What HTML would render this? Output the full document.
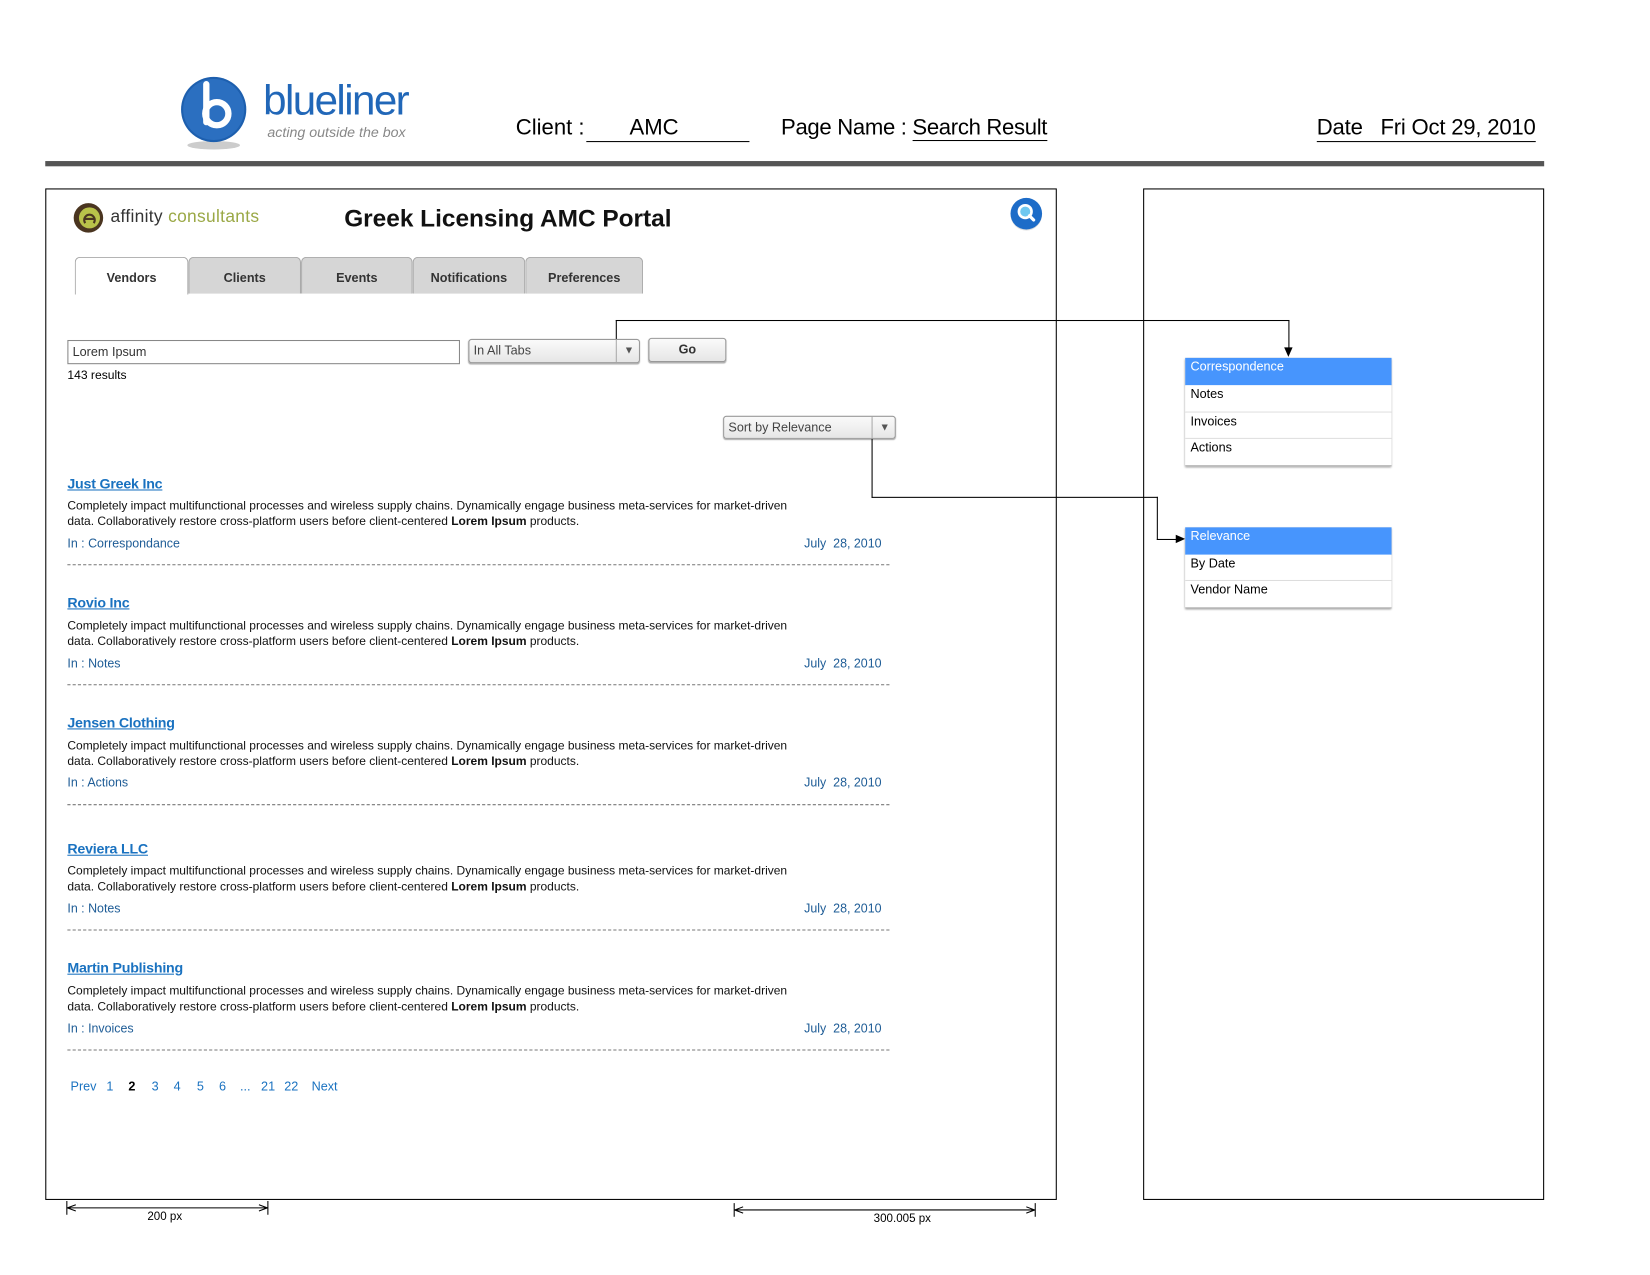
<!DOCTYPE html>
<html><head><meta charset="utf-8"><style>
html,body{margin:0;padding:0;background:#fff;width:1650px;height:1274px;overflow:hidden}
#s{position:absolute;left:0;top:0;width:1568px;height:1211px;transform:scale(1.0526);transform-origin:0 0;font-family:"Liberation Sans",Arial,sans-serif;color:#000}
.a{position:absolute;white-space:nowrap}
.tab{position:absolute;top:244px;height:35px;background:#d6d6d6;border:1px solid #aaa;border-bottom:none;border-radius:5px 5px 0 0;font-size:12px;font-weight:bold;color:#333;text-align:center;line-height:38px;box-sizing:border-box}
.sel{position:absolute;border:1px solid #999;border-radius:3px;background:linear-gradient(#fafafa,#e6e6e6);box-shadow:0 1px 1px #aaa;box-sizing:border-box;font-size:12px;color:#444;line-height:21px;padding-left:4px}
.title{font-size:13.5px;font-weight:bold;color:#1a72c0;text-decoration:underline;letter-spacing:-0.2px}
.desc{font-size:11.4px;line-height:15px;color:#111}
.meta{font-size:11.8px;color:#1e5c96}
.dash{position:absolute;left:64px;width:781px;border-top:1px dashed #777}
.row{position:absolute;left:1126px;width:196px;height:25px;border-bottom:1px solid #ddd;font-size:12px;line-height:16px;padding-left:5px;box-sizing:border-box;background:#fff}
.ln{position:absolute;background:#000}
.pg{position:absolute;top:1025px;font-size:12px;color:#1a72c0}
</style></head><body><div id="s">
<svg class="a" style="left:168px;top:68px" width="72" height="80" viewBox="0 0 72 80">
<ellipse cx="35" cy="70" rx="25" ry="4" fill="#ccc"/>
<circle cx="35" cy="36" r="31" fill="#1d5fae"/>
<circle cx="35" cy="36" r="29" fill="#2b6fc0"/>
<path d="M28 12 V48" stroke="#fff" stroke-width="6" stroke-linecap="round"/>
<circle cx="38" cy="40" r="11" fill="none" stroke="#fff" stroke-width="6"/>
</svg>
<div class="a" style="left:250px;top:74px;font-size:40px;color:#2167b8;letter-spacing:-1.5px">blueliner</div>
<div class="a" style="left:254px;top:118px;font-size:13.5px;font-style:italic;color:#888">acting outside the box</div>
<div class="a" style="left:490px;top:110px;font-size:21px">Client :</div>
<div class="a" style="left:557px;top:110px;width:155px;border-bottom:1px solid #000;font-size:21px;height:24px"><span style="margin-left:41px">AMC</span></div>
<div class="a" style="left:742px;top:110px;font-size:21px;letter-spacing:-0.3px">Page Name : <span style="border-bottom:1px solid #000">Search Result</span></div>
<div class="a" style="left:1251px;top:110px;font-size:21px;border-bottom:1px solid #000;line-height:24px;letter-spacing:-0.2px">Date&nbsp;&nbsp; Fri Oct 29, 2010</div>
<div class="a" style="left:43px;top:153px;width:1424px;height:5px;background:#555"></div>
<div class="a" style="left:43px;top:179px;width:959px;height:959px;border:1.5px solid #000"></div>
<div class="a" style="left:1086px;top:179px;width:379px;height:959px;border:1.5px solid #000"></div>
<svg class="a" style="left:69px;top:192px" width="30" height="30" viewBox="0 0 30 30">
<circle cx="15" cy="15" r="14" fill="#4a3520"/><circle cx="16" cy="15" r="10" fill="#b9c24a"/>
<path d="M11 16h10M12 20a5 5 0 1 1 8 0" stroke="#4a3520" stroke-width="2" fill="none"/>
</svg>
<div class="a" style="left:105px;top:197px;font-size:16.5px;color:#333;letter-spacing:0.3px">affinity <span style="color:#9aa845">consultants</span></div>
<div class="a" style="left:327px;top:194px;font-size:23.2px;font-weight:bold;color:#111">Greek Licensing AMC Portal</div>
<svg class="a" style="left:959px;top:187px" width="34" height="34" viewBox="0 0 34 34">
<circle cx="16" cy="17" r="15" fill="#ddd"/><circle cx="16" cy="16" r="15" fill="#1d6cc8"/>
<circle cx="15" cy="14" r="6" fill="#6fc8f0" stroke="#fff" stroke-width="2.5"/><path d="M19 18l4 4" stroke="#fff" stroke-width="3" stroke-linecap="round"/>
</svg>
<div class="tab" style="left:71px;width:108px;background:#fff;height:36px">Vendors</div>
<div class="tab" style="left:179px;width:107px">Clients</div>
<div class="tab" style="left:286px;width:106px">Events</div>
<div class="tab" style="left:392px;width:107px">Notifications</div>
<div class="tab" style="left:499px;width:112px">Preferences</div>
<div class="a" style="left:64px;top:323px;width:373px;height:23px;border:1px solid #888;box-sizing:border-box;font-size:12px;line-height:21px;padding-left:4px;color:#333">Lorem Ipsum</div>
<div class="sel" style="left:445px;top:322px;width:163px;height:23px">In All Tabs<span style="position:absolute;left:139px;top:0;height:21px;border-left:1px solid #aaa;width:23px;text-align:center;font-size:10px;color:#555">▼</span></div>
<div class="sel" style="left:616px;top:321px;width:74px;height:23px;text-align:center;padding:0;font-weight:bold;color:#333">Go</div>
<div class="a" style="left:64px;top:351px;font-size:11.5px">143 results</div>
<div class="sel" style="left:687px;top:395px;width:164px;height:22px;line-height:21px">Sort by Relevance<span style="position:absolute;left:140px;top:0;height:20px;border-left:1px solid #aaa;width:23px;text-align:center;font-size:10px;color:#555">▼</span></div>
<div class="ln" style="left:585px;top:304px;width:1px;height:18px"></div>
<div class="ln" style="left:585px;top:304px;width:640px;height:1px"></div>
<div class="ln" style="left:1224px;top:304px;width:1px;height:30px"></div>
<div class="a" style="left:1220px;top:330px;width:0;height:0;border-left:4px solid transparent;border-right:4px solid transparent;border-top:9px solid #000"></div>
<div class="ln" style="left:828px;top:417px;width:1px;height:56px"></div>
<div class="ln" style="left:828px;top:472px;width:272px;height:1px"></div>
<div class="ln" style="left:1099px;top:472px;width:1px;height:41px"></div>
<div class="ln" style="left:1099px;top:512px;width:20px;height:1px"></div>
<div class="a" style="left:1117px;top:508px;width:0;height:0;border-top:4px solid transparent;border-bottom:4px solid transparent;border-left:9px solid #000"></div>
<div class="a" style="left:1126px;top:340px;width:196px;height:103px;box-shadow:0 1px 2px #888;border:1px solid #ccc;box-sizing:border-box"></div>
<div class="row" style="top:340px;height:26px;background:#4795fd;color:#fff;border:none">Correspondence</div>
<div class="row" style="top:366px;height:26px">Notes</div>
<div class="row" style="top:392px;height:25px">Invoices</div>
<div class="row" style="top:417px;height:26px;border-bottom:1px solid #aaa">Actions</div>
<div class="a" style="left:1126px;top:501px;width:196px;height:77px;box-shadow:0 1px 2px #888;border:1px solid #ccc;box-sizing:border-box"></div>
<div class="row" style="top:501px;height:26px;background:#4795fd;color:#fff;border:none">Relevance</div>
<div class="row" style="top:527px;height:25px">By Date</div>
<div class="row" style="top:552px;height:26px;border-bottom:1px solid #aaa">Vendor Name</div>

<div class="a title" style="left:64px;top:452px">Just Greek Inc</div>
<div class="a desc" style="left:64px;top:474px">Completely impact multifunctional processes and wireless supply chains. Dynamically engage business meta-services for market-driven<br>data. Collaboratively restore cross-platform users before client-centered <b>Lorem Ipsum</b> products.</div>
<div class="a meta" style="left:64px;top:509px">In : Correspondance</div><div class="a meta" style="left:764px;top:509px">July&nbsp; 28, 2010</div>
<div class="dash" style="top:536px"></div>

<div class="a title" style="left:64px;top:565px">Rovio Inc</div>
<div class="a desc" style="left:64px;top:588px">Completely impact multifunctional processes and wireless supply chains. Dynamically engage business meta-services for market-driven<br>data. Collaboratively restore cross-platform users before client-centered <b>Lorem Ipsum</b> products.</div>
<div class="a meta" style="left:64px;top:623px">In : Notes</div><div class="a meta" style="left:764px;top:623px">July&nbsp; 28, 2010</div>
<div class="dash" style="top:650px"></div>

<div class="a title" style="left:64px;top:679px">Jensen Clothing</div>
<div class="a desc" style="left:64px;top:702px">Completely impact multifunctional processes and wireless supply chains. Dynamically engage business meta-services for market-driven<br>data. Collaboratively restore cross-platform users before client-centered <b>Lorem Ipsum</b> products.</div>
<div class="a meta" style="left:64px;top:736px">In : Actions</div><div class="a meta" style="left:764px;top:736px">July&nbsp; 28, 2010</div>
<div class="dash" style="top:764px"></div>

<div class="a title" style="left:64px;top:799px">Reviera LLC</div>
<div class="a desc" style="left:64px;top:821px">Completely impact multifunctional processes and wireless supply chains. Dynamically engage business meta-services for market-driven<br>data. Collaboratively restore cross-platform users before client-centered <b>Lorem Ipsum</b> products.</div>
<div class="a meta" style="left:64px;top:856px">In : Notes</div><div class="a meta" style="left:764px;top:856px">July&nbsp; 28, 2010</div>
<div class="dash" style="top:883px"></div>

<div class="a title" style="left:64px;top:912px">Martin Publishing</div>
<div class="a desc" style="left:64px;top:935px">Completely impact multifunctional processes and wireless supply chains. Dynamically engage business meta-services for market-driven<br>data. Collaboratively restore cross-platform users before client-centered <b>Lorem Ipsum</b> products.</div>
<div class="a meta" style="left:64px;top:970px">In : Invoices</div><div class="a meta" style="left:764px;top:970px">July&nbsp; 28, 2010</div>
<div class="dash" style="top:997px"></div>

<div class="pg" style="left:67px">Prev</div><div class="pg" style="left:101px">1</div>
<div class="pg" style="left:122px;color:#000;font-weight:bold">2</div>
<div class="pg" style="left:144px">3</div><div class="pg" style="left:165px">4</div><div class="pg" style="left:187px">5</div><div class="pg" style="left:208px">6</div>
<div class="pg" style="left:228px">...</div><div class="pg" style="left:248px">21</div><div class="pg" style="left:270px">22</div><div class="pg" style="left:296px">Next</div>

<svg class="a" style="left:60px;top:1138px" width="200" height="20"><path d="M3.5 3v13M194.5 3v13M4 9.5h190M4 9.5l8-3M4 9.5l8 3M194 9.5l-8-3M194 9.5l-8 3" stroke="#000" fill="none"/></svg>
<div class="a" style="left:140px;top:1150px;font-size:11px">200 px</div>
<svg class="a" style="left:694px;top:1140px" width="295" height="20"><path d="M3.5 3v13M289.5 3v13M4 9.5h285M4 9.5l8-3M4 9.5l8 3M289 9.5l-8-3M289 9.5l-8 3" stroke="#000" fill="none"/></svg>
<div class="a" style="left:830px;top:1152px;font-size:11px">300.005 px</div>
</div></body></html>
